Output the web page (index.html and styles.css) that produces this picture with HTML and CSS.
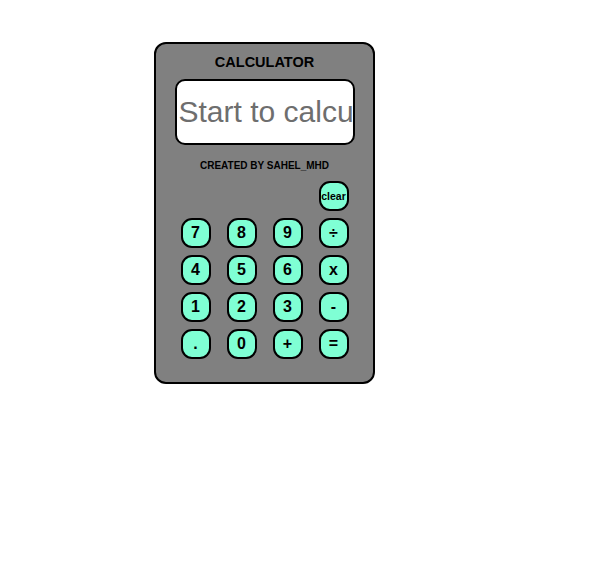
FILE: index.html
```html
<!DOCTYPE html>
<html>
<head>
<meta charset="utf-8">
<link rel="stylesheet" href="styles.css">
</head>
<body>
<div class="calc">
  <h1 class="title">CALCULATOR</h1>
  <input class="display" type="text" placeholder="Start to calculate">
  <p class="credit">CREATED BY SAHEL_MHD</p>
  <div class="keys">
    <button class="key key-clear">clear</button>
    <button class="key">7</button>
    <button class="key">8</button>
    <button class="key">9</button>
    <button class="key">÷</button>
    <button class="key">4</button>
    <button class="key">5</button>
    <button class="key">6</button>
    <button class="key">x</button>
    <button class="key">1</button>
    <button class="key">2</button>
    <button class="key">3</button>
    <button class="key">-</button>
    <button class="key">.</button>
    <button class="key">0</button>
    <button class="key">+</button>
    <button class="key">=</button>
  </div>
</div>
</body>
</html>
```
FILE: styles.css
```css
html, body {
  margin: 0;
  padding: 0;
  background: #ffffff;
  font-family: "Liberation Sans", Arial, sans-serif;
}
body {
  padding: 42px 0 0 154px;
}
.calc {
  box-sizing: border-box;
  width: 221px;
  height: 342px;
  background: #808080;
  border: 2px solid #000;
  border-radius: 12px;
  display: flex;
  flex-direction: column;
  align-items: center;
  padding-top: 10px;
}
.title {
  margin: 0;
  font-size: 14.5px;
  font-weight: bold;
  line-height: 16px;
  color: #000;
}
.display {
  box-sizing: border-box;
  margin-top: 9px;
  width: 180px;
  height: 66px;
  border: 2px solid #000;
  border-radius: 10px;
  background: #fff;
  font-family: "Liberation Sans", Arial, sans-serif;
  font-size: 30px;
  padding: 0 0 0 2px;
  color: #000;
  outline: none;
}
.display::placeholder {
  color: #6e6e6e;
  opacity: 1;
}
.credit {
  margin: 15px 0 0;
  font-size: 10px;
  font-weight: bold;
  line-height: 12px;
  color: #000;
}
.keys {
  margin-top: 9px;
  display: grid;
  grid-template-columns: repeat(4, 30px);
  grid-auto-rows: 30px;
  column-gap: 16px;
  row-gap: 7px;
}
.key {
  box-sizing: border-box;
  width: 30px;
  height: 30px;
  padding: 0;
  background: #7fffd4;
  border: 2px solid #000;
  border-radius: 11px;
  font-family: "Liberation Sans", Arial, sans-serif;
  font-size: 16px;
  font-weight: bold;
  color: #000;
}
.key-clear {
  grid-column: 4;
  font-size: 10.5px;
}
```
